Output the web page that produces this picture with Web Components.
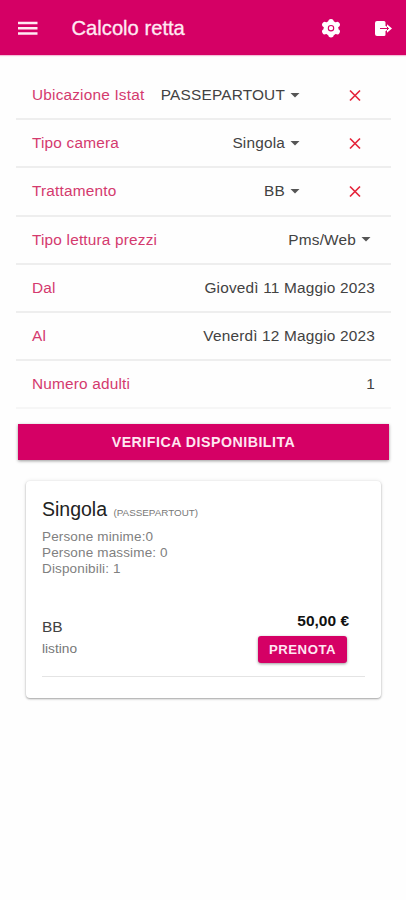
<!DOCTYPE html>
<html lang="it">
<head>
<meta charset="utf-8">
<meta name="viewport" content="width=device-width, initial-scale=1">
<title>Calcolo retta</title>
<style>
  body {
    margin: 0;
    background: #fefefe;
    color: #424242;
    font-family: "Liberation Sans", Arial, sans-serif;
    --accent: #d50065;
    --label: #d43a6e;
  }
</style>
</head>
<body>
<calcolo-page></calcolo-page>

<script>
/***
 Helper: attach an open shadow root and clone the template into it
 ***/
function render(host, markup) {
  const template = document.createElement('template');
  template.innerHTML = markup;
  const shadow = host.attachShadow({ mode: 'open' });
  shadow.appendChild(template.content.cloneNode(true));
  return shadow;
}

// Icons shared by all the components
const icons = {
  menu: `<path d="M0 2h19.500M0 7.200h19.500M0 12.400h19.500" fill="none" stroke="currentColor" stroke-width="2.500"/>`,
  gear: `<circle cx="9" cy="9.200" r="7.400" fill="currentColor"/>
    <path d="M9 2.700v13M2.800 5.700l12.400 7M2.800 12.700l12.400-7" fill="none" stroke="currentColor" stroke-width="5.400" stroke-linecap="round"/>
    <circle cx="9" cy="9.200" r="2.700" fill="none" stroke="#d50065" stroke-width="1.100"/>`,
  exit: `<path fill="currentColor" d="M2 0h7a1.500 1.500 0 0 1 1.500 1.500V5h1.500V3.200L17 7.500 12 11.800V10h-1.500v3.500A1.500 1.500 0 0 1 9 15H2a2 2 0 0 1-2-2V2a2 2 0 0 1 2-2z"/><path d="M5 7.500h8.500M11.500 5.500l2 2-2 2" fill="none" stroke="#d50065" stroke-width="1"/>`,
  clear: `<path d="M1 .5l10 10M11 .5l-10 10" fill="none" stroke="#e5263c" stroke-width="1.700"/>`,
  caret: `<path d="M.5 0h9L5 4.500z" fill="#555"/>`
};

// <app-icon name w h box>
class AppIcon extends HTMLElement {
  connectedCallback() {
    const w = this.getAttribute('w');
    const h = this.getAttribute('h');
    render(this, `
      <style>
        :host { display: block; flex: none; }
        svg { display: block; overflow: visible; }
      </style>
      <svg width="${w}" height="${h}" viewBox="${this.getAttribute('box')}">${icons[this.getAttribute('name')]}</svg>
    `);
  }
}

// Top bar
class AppBar extends HTMLElement {
  connectedCallback() {
    render(this, `
      <style>
        :host {
          display: flex;
          align-items: center;
          height: 55px;
          box-sizing: border-box;
          padding: 1px 14px 0 18px;
          color: #ffeaf3;
          background: var(--accent);
          box-shadow: 0 1px 1px rgba(213, 0, 101, .25);
        }
        .title {
          flex: 1;
          margin-left: 33.500px;
          font-size: 20.200px;
          line-height: 24px;
          -webkit-text-stroke: .3px currentColor;
        }
        .actions { display: flex; align-items: center; gap: 34px; color: #fff; }
      </style>
      <app-icon name="menu" w="20" h="15" box="0 0 20 15"></app-icon>
      <div class="title"><slot></slot></div>
      <div class="actions">
        <app-icon name="gear" w="19" h="19" box="0 0 19 19"></app-icon>
        <app-icon name="exit" w="17" h="15" box="0 0 17 15"></app-icon>
      </div>
    `);
  }
}

// One line of the form: "select" adds the caret, "clearable" the red cross
class FormRow extends HTMLElement {
  connectedCallback() {
    const caret = this.hasAttribute('select')
      ? '<app-icon class="caret" name="caret" w="9" h="5" box="0 0 9 5"></app-icon>' : '';
    const clear = this.hasAttribute('clearable')
      ? '<app-icon class="clear" name="clear" w="11" h="11" box="0 0 11 11"></app-icon>' : '';
    render(this, `
      <style>
        :host {
          display: flex;
          align-items: center;
          height: 48.2px;
          box-sizing: border-box;
          padding: 0 16px;
          border-bottom: 2px solid #eee;
          font-size: 15.400px;
          letter-spacing: .180px;
          white-space: nowrap;
        }
        .label { flex: 1; color: var(--label); }
        .caret { margin: 0 5px 0 5px; }
        .clear { margin: 0 15px 0 45px; }
      </style>
      <span class="label">${this.getAttribute('label')}</span>
      <span><slot></slot></span>
      ${caret}${clear}
    `);
  }
}

class AppButton extends HTMLElement {
  connectedCallback() {
    render(this, `
      <style>
        :host {
          display: flex;
          align-items: center;
          justify-content: center;
          box-sizing: border-box;
          color: #ffe6f1;
          background: var(--accent);
          font-weight: 700;
          letter-spacing: .5px;
          white-space: nowrap;
          box-shadow: 0 1px 3px rgba(0, 0, 0, .4);
        }
      </style>
      <slot></slot>
    `);
  }
}

/* Result card */
class RoomCard extends HTMLElement {
  connectedCallback() {
    render(this, `
      <style>
        :host {
          display: block;
          box-sizing: border-box;
          height: 217px;
          margin: 21px 25px 0 26px;
          padding: 17px 16px 0;
          border-radius: 4px;
          background: #fff;
          box-shadow: 0 1px 2px rgba(0, 0, 0, .32), 0 0 4px rgba(0, 0, 0, .1);
        }
        .head { height: 22px; color: #222; font-size: 19.500px; line-height: 22px; white-space: nowrap; }
        .head small { margin-left: 1px; color: #777; font-size: 9.850px; }
        .info { margin-top: 9px; color: #808080; font-size: 13.500px; line-height: 15.700px; letter-spacing: .150px; }
        .offer {
          display: flex;
          justify-content: space-between;
          height: 66px;
          box-sizing: border-box;
          margin-top: 35px;
          border-bottom: 1px solid #e4e4e4;
        }
        .plan { padding-top: 6px; font-size: 15.500px; line-height: 20px; }
        .list { margin-top: 2px; color: #777; font-size: 13.700px; }
        .buy { display: flex; flex-direction: column; align-items: flex-end; margin-right: 18px; }
        .price { margin-right: -2px; color: #111; font-size: 15.500px; font-weight: 700; line-height: 20px; }
        app-button { width: 89px; height: 27px; margin-top: 5px; border-radius: 3px; font-size: 13.200px; }
      </style>
      <div class="head">Singola <small>(PASSEPARTOUT)</small></div>
      <div class="info">
        <div>Persone minime:0</div>
        <div>Persone massime: 0</div>
        <div>Disponibili: 1</div>
      </div>
      <div class="offer">
        <div class="plan">BB<div class="list">listino</div></div>
        <div class="buy">
          <div class="price">50,00 €</div>
          <app-button>PRENOTA</app-button>
        </div>
      </div>
    `);
  }
}

class CalcoloPage extends HTMLElement {
  connectedCallback() {
    render(this, `
      <style>
        :host { display: block; height: 900px; overflow: hidden; }
        .form { padding: 17px 15px 0 16px; }
        .form form-row:last-child { border-color: #f6f6f6; }
        .check { height: 36px; margin: 15px 17px 0 18px; font-size: 14.200px; }
      </style>
      <app-bar>Calcolo retta</app-bar>
      <div class="form">
        <form-row label="Ubicazione Istat" select clearable>PASSEPARTOUT</form-row>
        <form-row label="Tipo camera" select clearable>Singola</form-row>
        <form-row label="Trattamento" select clearable>BB</form-row>
        <form-row label="Tipo lettura prezzi" select>Pms/Web</form-row>
        <form-row label="Dal">Giovedì 11 Maggio 2023</form-row>
        <form-row label="Al">Venerdì 12 Maggio 2023</form-row>
        <form-row label="Numero adulti">1</form-row>
      </div>
      <app-button class="check">VERIFICA DISPONIBILITA</app-button>
      <room-card></room-card>
    `);
  }
}

/* Register all custom elements */
customElements.define('app-icon', AppIcon);
customElements.define('app-bar', AppBar);
customElements.define('form-row', FormRow);
customElements.define('app-button', AppButton);
customElements.define('room-card', RoomCard);
customElements.define('calcolo-page', CalcoloPage);
</script>
</body>
</html>
